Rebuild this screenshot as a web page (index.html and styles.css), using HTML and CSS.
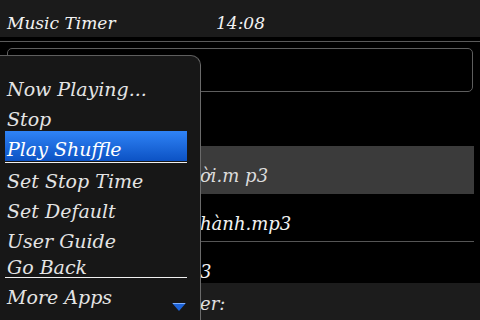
FILE: index.html
```html
<!DOCTYPE html>
<html lang="vi">
<head>
  <meta charset="UTF-8">
  <title>Music Timer</title>
  <link rel="stylesheet" href="styles.css">
</head>
<body>
  <div class="screen">
    <div class="titlebar">
      <span class="app-name">Music Timer</span>
      <span class="clock">14:08</span>
    </div>
    <div class="rule"></div>

    <div class="content">
      <div class="search"></div>
      <!-- the menu covers the left part of each row -->
      <ul class="tracks">
        <li></li>
        <li class="selected">ời.m p3</li>
        <li class="divided">hành.mp3</li>
        <li>3</li>
      </ul>
    </div>
    <div class="footer">er:</div>

    <div class="menu">
      <div class="item">Now Playing...</div>
      <div class="item">Stop</div>
      <div class="item active">Play Shuffle</div>
      <div class="sep"></div>
      <div class="item">Set Stop Time</div>
      <div class="item">Set Default</div>
      <div class="item">User Guide</div>
      <div class="item short">Go Back</div>
      <div class="sep flush"></div>
      <div class="item more">
        <span>More Apps</span>
        <svg class="arrow" width="14" height="9" viewBox="0 0 14 9">
          <path d="M0 0 H14 L7 8 Z" fill="#1d63d8"/>
          <path d="M1 0.5 H13" stroke="#7fb0ff" stroke-width="1"/>
        </svg>
      </div>
    </div>
  </div>
</body>
</html>
```

FILE: styles.css
```css
body {
  margin: 0;
  background-color: #000;
}
.screen {
  position: relative;
  width: 480px;
  height: 320px;
  overflow: hidden;
  background-color: #000;
  font-family: "DejaVu Serif", serif;
  font-style: italic;
  font-size: 18px;
  color: #f2f2f2;
}
.titlebar {
  height: 37px;
  margin-bottom: 4px;
  background-color: #1b1b1b;
  display: flex;
  font-size: 17px;
  line-height: 46px;
  white-space: nowrap;
}
.app-name {
  padding-left: 7px;
  width: 209px;
}
.rule {
  height: 1px;
  background-color: #5a5a5a;
}
.content {
  height: 241px;
  overflow: hidden;
}
.search {
  height: 42px;
  margin: 6px 7px 6px 7px;
  border: 1px solid #5e5e5e;
  border-radius: 5px;
}
.tracks {
  list-style: none;
  margin: 0 6px 0 0;
  padding: 0;
}
.tracks li {
  height: 48px;
  box-sizing: border-box;
  padding: 18px 0 6px 200px;
  line-height: 24px;
  white-space: nowrap;
}
.tracks li.selected {
  background-color: #3b3b3b;
  color: #dcdcdc;
}
.tracks li.divided {
  border-bottom: 1px solid #555;
}
.footer {
  height: 37px;
  background-color: #1c1c1c;
  padding-left: 200px;
  line-height: 42px;
  color: #e0e0e0;
  white-space: nowrap;
}
.menu {
  position: absolute;
  left: -1px;
  top: 55px;
  bottom: 0;
  width: 202px;
  box-sizing: border-box;
  padding-top: 15px;
  background-color: #171717;
  border-top: 1px solid #5e5e5e;
  border-right: 1px solid #6a6a6a;
  border-top-right-radius: 10px;
  font-size: 19px;
  color: #e4e4e4;
}
.item {
  height: 30px;
  box-sizing: border-box;
  margin-left: 6px;
  width: 182px;
  padding: 7px 0 0 2px;
  line-height: 22px;
  white-space: nowrap;
}
.item.active {
  background: linear-gradient(#2f83f6, #0c52c4);
  color: #fff;
}
.item.short {
  height: 24px;
  padding-top: 3px;
}
.sep {
  height: 1px;
  margin: 1px 0 0 6px;
  width: 182px;
  background-color: #f0f0f0;
}
.sep.flush {
  margin-top: 0;
}
.item.more {
  display: flex;
  justify-content: space-between;
  align-items: flex-end;
}
.arrow {
  margin: 0 1px -4px 0;
}
```
